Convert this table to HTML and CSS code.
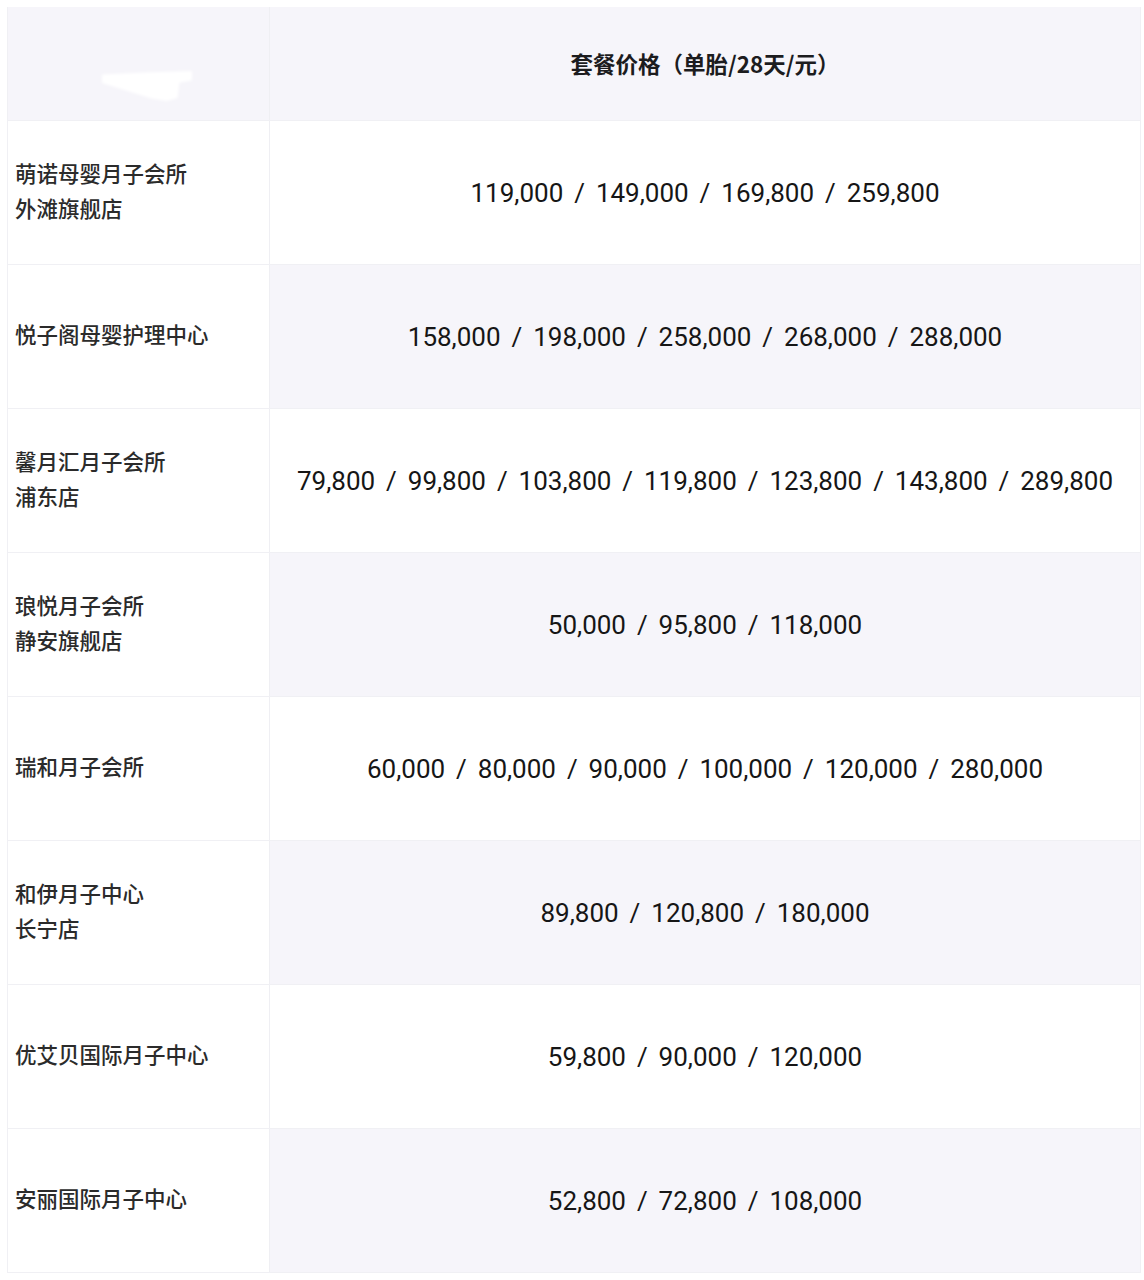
FILE: index.html
```html
<!DOCTYPE html>
<html lang="zh-CN">
<head>
<meta charset="utf-8">
<link rel="stylesheet" href="styles.css">
</head>
<body>
<div class="table">
  <div class="cell head name-head"><span class="smudge-wrap"><span class="smudge"></span></span></div>
  <div class="cell head price-head">套餐价格（单胎/28天/元）</div>

  <div class="cell name">萌诺母婴月子会所<br>外滩旗舰店</div>
  <div class="cell price">119,000 / 149,000 / 169,800 / 259,800</div>

  <div class="cell name">悦子阁母婴护理中心</div>
  <div class="cell price alt">158,000 / 198,000 / 258,000 / 268,000 / 288,000</div>

  <div class="cell name">馨月汇月子会所<br>浦东店</div>
  <div class="cell price">79,800 / 99,800 / 103,800 / 119,800 / 123,800 / 143,800 / 289,800</div>

  <div class="cell name">琅悦月子会所<br>静安旗舰店</div>
  <div class="cell price alt">50,000 / 95,800 / 118,000</div>

  <div class="cell name">瑞和月子会所</div>
  <div class="cell price">60,000 / 80,000 / 90,000 / 100,000 / 120,000 / 280,000</div>

  <div class="cell name">和伊月子中心<br>长宁店</div>
  <div class="cell price alt">89,800 / 120,800 / 180,000</div>

  <div class="cell name">优艾贝国际月子中心</div>
  <div class="cell price">59,800 / 90,000 / 120,000</div>

  <div class="cell name">安丽国际月子中心</div>
  <div class="cell price alt">52,800 / 72,800 / 108,000</div>
</div>
</body>
</html>
```
FILE: styles.css
```css
* { box-sizing: border-box; }
html, body { margin: 0; padding: 0; background: #ffffff; }
body { padding: 7px 0 0 7px; }

.table {
  width: 1134px;
  display: grid;
  grid-template-columns: 262px 1fr;
  grid-template-rows: 113px repeat(8, 144px);
  border-right: 1px solid #f0f0f4;
  border-bottom: 1px solid #f0f0f4;
  border-left: 1px solid #f0f0f4;
}

.cell {
  display: flex;
  align-items: center;
  border-top: 1px solid #f0f0f4;
}

.head {
  background: #f6f5fa;
  border-top: none;
}

.name-head {
  border-right: 1px solid #efeff3;
  padding: 64px 0 0 94px;
  align-items: flex-start;
}

.smudge-wrap {
  display: block;
  filter: blur(1.5px);
}

.smudge {
  display: block;
  width: 90px;
  height: 30px;
  background: #ffffff;
  clip-path: polygon(0 12%, 55% 4%, 100% 0, 100% 32%, 86% 38%, 84% 90%, 72% 100%, 55% 92%, 0 40%);
}

.price-head {
  justify-content: center;
  font-family: "Noto Sans CJK SC", "Noto Sans", sans-serif;
  font-weight: 700;
  font-size: 22.5px;
  color: #1c1c1e;
  padding-bottom: 1px;
}

.name {
  background: #ffffff;
  border-right: 1px solid #efeff3;
  padding: 0 0 6px 7px;
  font-family: "Noto Sans CJK SC", sans-serif;
  font-weight: 500;
  font-size: 21.5px;
  line-height: 35px;
  color: #2b2b2b;
}

.price {
  justify-content: center;
  text-align: center;
  font-family: Roboto, "Noto Sans", sans-serif;
  font-weight: 400;
  font-size: 26px;
  word-spacing: 4.5px;
  color: #161616;
  background: #ffffff;
}

.price.alt {
  background: #f6f5fa;
}
```
